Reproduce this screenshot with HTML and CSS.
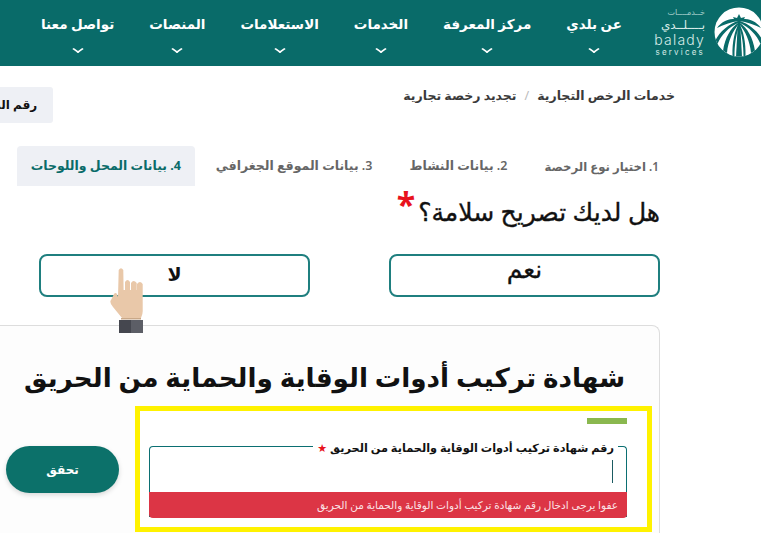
FILE: index.html
```html
<!DOCTYPE html>
<html lang="ar" dir="rtl">
<head>
<meta charset="utf-8">
<title>بلدي</title>
<link rel="stylesheet" href="styles.css">
</head>
<body>
<header class="topbar">
  <div class="logo">
    <svg class="logo-mark" viewBox="0 0 50 50" width="50" height="50">
      <defs>
        <clipPath id="disc"><circle cx="25" cy="25" r="24.500"/></clipPath>
        <g id="fronds">
          <path d="M25 12C16 11 8 14 3 21C9 18 17 15 25 14z"/>
          <path d="M24 14C15 17 6 24 1 34L3.500 37C7 28 15 20 24 16z"/>
          <path d="M24 16C17 21 11 30 9 44L13 46C14 34 19 24 24 18z"/>
          <path d="M24 18C21 24 18 34 18.500 49L20.500 49C20.500 38 22 28 24.500 21z"/>
        </g>
      </defs>
      <circle cx="25" cy="25" r="24.500" fill="#fff"/>
      <g fill="#096b69" clip-path="url(#disc)">
        <use href="#fronds"/>
        <use href="#fronds" transform="matrix(-1 0 0 1 50 0)"/>
        <path d="M24 13h2l2 37h-6z"/>
        <path d="M25 7l-2 4-4-1 2 4h8l2-4-4 1z"/>
      </g>
    </svg>
    <div class="logo-text" dir="ltr">
      <span class="logo-ar-sm">خــدمــــات</span>
      <span class="logo-ar">بــــلــدي</span>
      <span class="logo-en">balady</span>
      <span class="logo-sub">services</span>
    </div>
  </div>
  <nav class="mainnav">
    <a class="navitem"><span>عن بلدي</span><i class="chev"></i></a>
    <a class="navitem"><span>مركز المعرفة</span><i class="chev"></i></a>
    <a class="navitem"><span>الخدمات</span><i class="chev"></i></a>
    <a class="navitem"><span>الاستعلامات</span><i class="chev"></i></a>
    <a class="navitem"><span>المنصات</span><i class="chev"></i></a>
    <a class="navitem"><span>تواصل معنا</span><i class="chev"></i></a>
  </nav>
</header>

<main class="page">
  <div class="crumbrow">
    <div class="crumbs"><span>خدمات الرخص التجارية</span><span class="sep">/</span><span>تجديد رخصة تجارية</span></div>
    <div class="lookup">رقم الطلب</div>
  </div>

  <ul class="tabs">
    <li class="tab tab-first">1. اختيار نوع الرخصة</li>
    <li class="tab">2. بيانات النشاط</li>
    <li class="tab">3. بيانات الموقع الجغرافي</li>
    <li class="tab active">4. بيانات المحل واللوحات</li>
  </ul>

  <h2 class="question">هل لديك تصريح سلامة؟<span class="req">*</span></h2>

  <div class="choices">
    <button class="choice">نعم</button>
    <button class="choice choice-no">لا
      <svg class="hand" viewBox="0 0 34 65" width="34" height="65">
        <path fill="#e9c8a9" d="M8.700 2Q11-1.500 13.300 2L13.600 22H15V14Q17.500 10 20 14V22H21V15Q23.500 11 26.700 15V22H27V16Q30 12 32.700 16V42Q33 46 31 50H12L3 39Q-1 34 1 32L4 26Q5.500 24 7 26L8 29z"/>
        <rect x="11" y="50" width="20" height="1.500" fill="#c9a888"/>
        <rect x="9" y="52" width="12" height="13" fill="#45474f"/>
        <rect x="21" y="52" width="12" height="13" fill="#5c5e66"/>
      </svg>
    </button>
  </div>

  <section class="card">
    <h1 class="card-title">شهادة تركيب أدوات الوقاية والحماية من الحريق</h1>
    <div class="verify-row">
      <div class="highlight">
        <div class="accent"></div>
        <fieldset class="field">
          <legend>رقم شهادة تركيب أدوات الوقاية والحماية من الحريق <b class="star">★</b></legend>
          <div class="caret-line"><i class="caret"></i></div>
          <div class="error">عفوا يرجى ادخال رقم شهادة تركيب أدوات الوقاية والحماية من الحريق</div>
        </fieldset>
      </div>
      <button class="verify">تحقق</button>
    </div>
  </section>
</main>
</body>
</html>
```
FILE: styles.css
```css
* { box-sizing: border-box; }
html, body { margin: 0; height: 533px; overflow: hidden; background: #fff; }
body { font-family: "Noto Sans", "DejaVu Sans", sans-serif; color: #111; width: 761px; }

.topbar { height: 66px; background: #096b69; display: flex; align-items: flex-start; color: #fff; overflow: hidden; }
.logo { width: 139px; height: 66px; display: flex; align-items: center; gap: 9px; padding: 0 0 2px 0; flex: none; }
.logo-mark { flex: none; margin-right: -3px; }
.logo-text { width: 52px; margin-top: -2px; display: flex; flex-direction: column; align-items: flex-end; line-height: 1; color: #d8ebe8; }
.logo-ar-sm { font-size: 8px; height: 12px; line-height: 12px; opacity: .75; }
.logo-ar { font-size: 12px; height: 15px; line-height: 13px; }
.logo-en { font-size: 14px; letter-spacing: 1.200px; height: 14px; line-height: 14px; font-family: "Inter", sans-serif; font-weight: 300; }
.logo-sub { font-size: 8px; letter-spacing: 2.200px; height: 10px; line-height: 10px; font-family: "Inter", sans-serif; }

.mainnav { display: flex; gap: 35px; }
.navitem { display: flex; flex-direction: column; align-items: center; padding-top: 13px; font-size: 13.500px; font-weight: 700; white-space: nowrap; }
.navitem span { line-height: 22px; }
.chev { width: 8px; height: 8px; border: solid #fff; border-width: 0 2px 2px 0; transform: scaleY(.7) rotate(45deg); margin-top: 10px; }

.page { padding-right: 86px; width: 761px; }
.crumbrow { display: flex; align-items: flex-start; height: 80px; width: 700px; padding-top: 21px; }
.crumbs { display: flex; gap: 8px; font-size: 12.500px; font-weight: 700; color: #3a3a3a; line-height: 18px; white-space: nowrap; }
.sep { color: #bbb; font-weight: 400; }
.lookup { margin-right: 350px; flex: none; width: 120px; height: 36px; background: #eef0f5; border-radius: 3px; font-size: 12px; font-weight: 700; line-height: 36px; padding-right: 16px; }

.tabs { list-style: none; display: flex; margin: 0 16px 0 0; padding: 0; height: 40px; gap: 37px; font-size: 12.500px; font-weight: 600; color: #666; white-space: nowrap; }
.tab { line-height: 40px; }
.tab-first { font-size: 11.700px; }
.tab.active { background: #eef0f5; color: #096b69; font-weight: 700; width: 178px; margin-right: -16px; border-radius: 4px 4px 0 0; text-align: center; }

.question { margin: 8px 15px 0 0; font-size: 25px; font-weight: 400; -webkit-text-stroke: .35px #111; line-height: 34px; height: 60px; width: 300px; white-space: nowrap; }
.req { color: #e8131d; -webkit-text-stroke: 0; font-size: 34px; line-height: 0; font-weight: 700; vertical-align: 4px; margin-right: 3px; }

.choices { display: grid; grid-template-columns: 271px 271px; column-gap: 79px; margin: 0 15px 28px 0; width: 621px; }
.choice { position: relative; height: 43px; border: 2px solid #1f7f7f; border-radius: 8px; background: #fff; font: 400 25px "Noto Sans", "DejaVu Sans", sans-serif; line-height: 20px; -webkit-text-stroke: .3px #111; color: #111; padding: 0 0 16px; }
.choice-no { font-size: 19px; font-weight: 700; -webkit-text-stroke: 0; padding: 0 0 4px; }
.hand { position: absolute; left: 69px; top: 12px; }

.card { margin-right: 15px; width: 680px; height: 208px; border: 1px solid #ddd; border-bottom: 0; border-radius: 8px 8px 0 0; background: #fdfdfd; padding: 29px 34px 0 0; }
.card-title { margin: 0; font-size: 26.300px; font-weight: 600; line-height: 44px; white-space: nowrap; height: 51px; }
.verify-row { display: flex; gap: 16px; margin-right: -27px; }
.highlight { flex: none; width: 517px; height: 126px; border: 5px solid #fff200; padding: 7px 20px 0 9px; background: #fff; }
.accent { width: 40px; height: 6px; background: #8ab84f; margin-bottom: 15px; }
.field { margin: 0; padding: 0; border: 1px solid #0b6f72; border-bottom: 0; border-radius: 4px 4px 0 0; min-width: 0; }
.field legend { font-size: 11.300px; font-weight: 700; margin-right: 8px; padding: 0 4px; line-height: 14px; white-space: nowrap; color: #111; transform: translateY(2px); }
.star { color: #e8131d; font-size: 11px; }
.caret-line { height: 39px; padding: 7px 13px 0 0; }
.caret { display: block; width: 1px; height: 23px; background: #1b5b62; }
.error { background: #dc3545; color: #fbe3e5; font-size: 10.500px; height: 26px; line-height: 26px; padding: 0 9px; border-radius: 0 0 4px 4px; margin: 0 -1px -1px; white-space: nowrap; }
.verify { flex: none; margin-top: 40px; width: 113px; height: 47px; border: 0; border-radius: 24px; background: #0c716a; color: #fff; font: 700 12px "Noto Sans", "DejaVu Sans", sans-serif; box-shadow: 0 2px 5px rgba(0,0,0,.15); }
```
